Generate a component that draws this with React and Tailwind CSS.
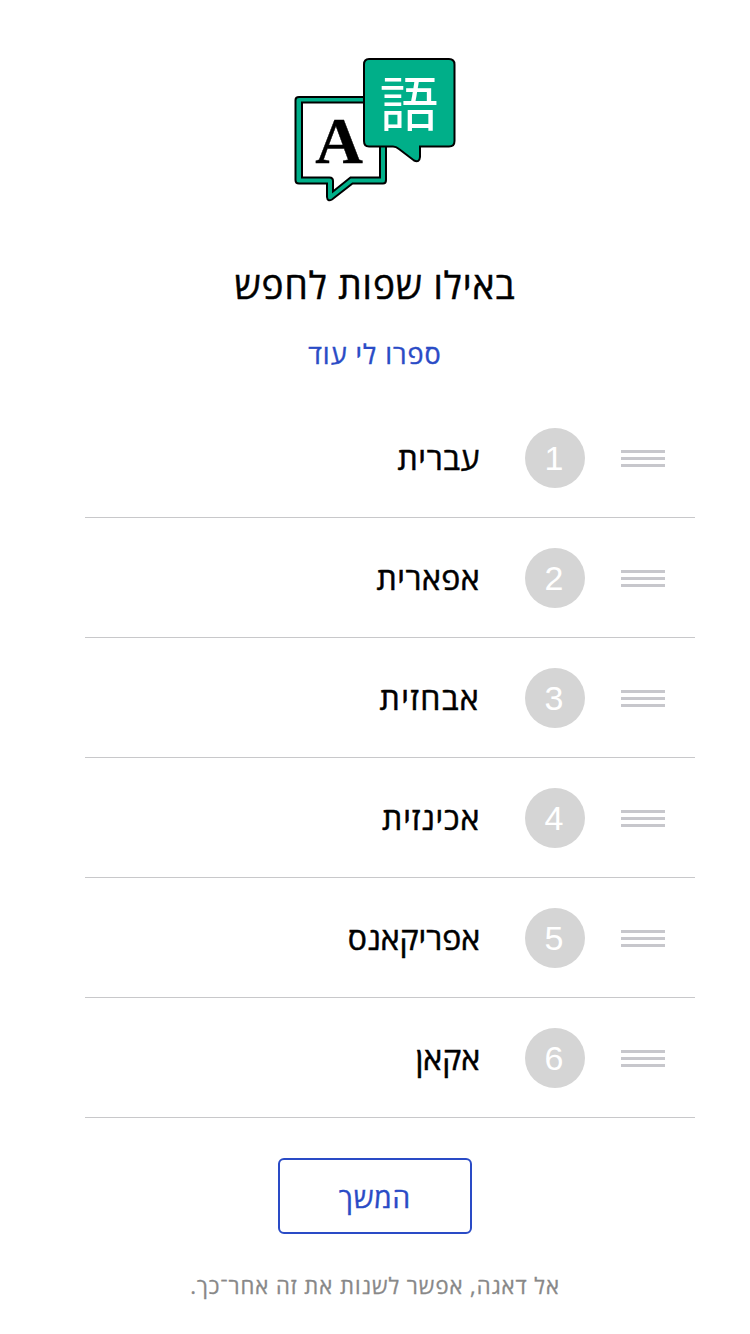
const languages = [
  { name: 'עברית', spacing: 'tracking-[0.6px]' },
  { name: 'אפארית', spacing: 'tracking-[0.5px]' },
  { name: 'אבחזית', spacing: 'tracking-[1.4px]' },
  { name: 'אכינזית', spacing: 'tracking-[0.8px]' },
  { name: 'אפריקאנס', spacing: 'tracking-[0px]' },
  { name: 'אקאן', spacing: 'tracking-[0px]' },
];

function LanguagesLogo() {
  return (
    <svg className="block h-[146px] w-[164px] overflow-visible" viewBox="293 57 164 146" fill="none">
      <path
        d="M299 97H383Q386 97 386 100V180Q386 183.500 383 183.500H352.500L332 199.500Q327.500 202 327 197V183.500H299Q295.500 183.500 295.500 180V100Q295.500 97 299 97Z"
        fill="#00af89" stroke="#000" strokeWidth="2"
      />
      <path
        d="M302 102.500H380V177.500H350.500L333 191.500V181Q333 177.500 329.500 177.500H302Z"
        fill="#fff" stroke="#000" strokeWidth="2"
      />
      <path
        d="M369 59H449Q454.500 59 454.500 64.500V141Q454.500 146.500 449 146.500H420V157Q419.500 163 414 160.500L399 149Q396 146.500 393 146.500H369Q364 146.500 364 141V64.500Q364 59 369 59Z"
        fill="#00af89" stroke="#000" strokeWidth="2"
      />
      <text x="339" y="162.500" textAnchor="middle" fontSize="66" fill="#000" stroke="#000" strokeWidth="0.4" className="font-['Liberation_Serif',serif] font-bold">A</text>
      <text x="409" y="125.500" textAnchor="middle" fontSize="59" fill="#fff" className="font-['Noto_Sans_CJK_JP',sans-serif]">語</text>
    </svg>
  );
}

function DragHandle() {
  return (
    <div className="mt-0.5 flex w-11 flex-col gap-1">
      <div className="h-[3px] bg-[#c7c7cc]" />
      <div className="h-[3px] bg-[#c7c7cc]" />
      <div className="h-[3px] bg-[#c7c7cc]" />
    </div>
  );
}

export default function App() {
  return (
    <main dir="rtl" className="flex h-[1334px] w-[750px] flex-col items-center bg-white pt-[57px] font-['Open_Sans',sans-serif] text-black">
      <LanguagesLogo />
      <h1 className="mt-[58px] text-[37px] leading-[48px] tracking-[0.95px] [-webkit-text-stroke:0.5px]">באילו שפות לחפש</h1>
      <a className="mt-[27px] text-[27px] leading-[36px] tracking-[1px] text-[#2a4bc6] [-webkit-text-stroke:0.4px]">ספרו לי עוד</a>
      <ul className="mt-[26px] mr-[-30px] w-[610px]">
        {languages.map(({ name, spacing }, i) => (
          <li key={name} className="flex h-[120px] items-center border-b border-[#c8c8ca] pr-[30px]">
            <DragHandle />
            <div className="mr-9 flex size-[60px] items-center justify-center rounded-full bg-[#d5d5d5] pt-px pr-0.5 font-['Liberation_Sans'] text-[34px] text-white">{i + 1}</div>
            <span className={'mr-[45px] text-[32px] leading-[40px] [-webkit-text-stroke:0.5px] ' + spacing}>{name}</span>
          </li>
        ))}
      </ul>
      <button className="mt-10 h-[76px] w-[194px] rounded-md border-2 border-[#2a4bc6] pt-0.5 text-[28px] tracking-[0.8px] text-[#2a4bc6] [-webkit-text-stroke:0.4px]">המשך</button>
      <p className="mt-[35px] text-[22px] leading-[32px] tracking-[1px] text-[#888] [-webkit-text-stroke:0.3px]">אל דאגה, אפשר לשנות את זה אחר־כך.</p>
    </main>
  );
}
